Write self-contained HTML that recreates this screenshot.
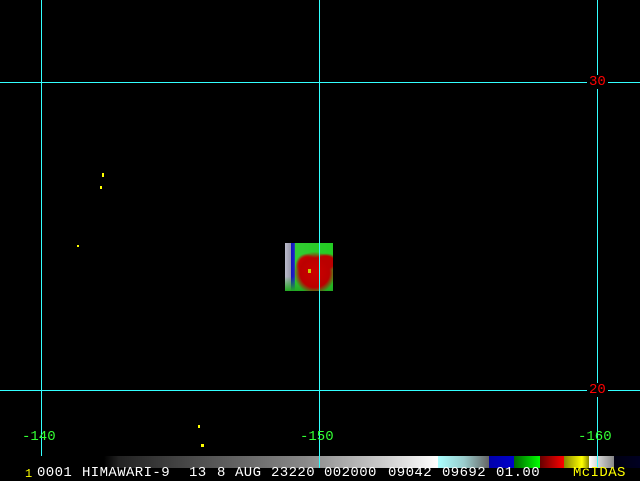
<!DOCTYPE html>
<html><head><style>
body{margin:0;width:640px;height:480px;background:#000;position:relative;overflow:hidden;font-family:"Liberation Mono",monospace}
.v{position:absolute;top:0;width:1px;height:456px;background:#3ff}
.h{position:absolute;left:0;width:640px;height:1px;background:#3ff}
.t{position:absolute;font-size:14px;line-height:14px;white-space:pre}
.s span{position:absolute;top:0;letter-spacing:0.4px}
.y{position:absolute;background:#ff0}
</style></head><body>
<div class="v" style="left:41px"></div>
<div class="v" style="left:319px"></div>
<div class="v" style="left:597px"></div>
<div class="h" style="top:82px"></div>
<div class="h" style="top:390px"></div>
<div class="t" style="left:587px;top:75px;color:#f00;background:#000;padding:0 2px">30</div>
<div class="t" style="left:587px;top:383px;color:#f00;background:#000;padding:0 2px">20</div>
<div class="t" style="left:22px;top:430px;color:#3f3">-140</div>
<div class="t" style="left:300px;top:430px;color:#3f3">-150</div>
<div class="t" style="left:578px;top:430px;color:#3f3">-160</div>
<div style="position:absolute;left:285px;top:243px;width:48px;height:48px;background:
radial-gradient(ellipse at 62% 62%,#c00 0,#b00 35%,transparent 50%),
radial-gradient(ellipse at 45% 45%,#c00 0,#c00 20%,transparent 30%),
radial-gradient(ellipse at 85% 40%,#b00 0,#b00 15%,transparent 22%),
linear-gradient(180deg,transparent 0,transparent 70%,#2a2 100%),
linear-gradient(90deg,#bbc 0,#99a 12%,#11b 13%,#22c 20%,#3c3 21%,#2c2 100%)"></div>
<div class="v" style="left:319px;top:243px;height:48px"></div>
<div class="y" style="left:308px;top:269px;width:3px;height:4px;background:#cc0"></div>
<div class="y" style="left:102px;top:173px;width:2px;height:4px"></div>
<div class="y" style="left:100px;top:186px;width:2px;height:3px"></div>
<div class="y" style="left:77px;top:245px;width:2px;height:2px"></div>
<div class="y" style="left:198px;top:425px;width:2px;height:3px"></div>
<div class="y" style="left:201px;top:444px;width:3px;height:3px"></div>
<div style="position:absolute;left:104px;top:456px;width:536px;height:12px;background:linear-gradient(90deg,
#000 0,#222 15px,#888 200px,#ccc 280px,#fff 334px,
#aff 334px,#9cc 360px,#666 385px,
#00a 385px,#00c 410px,
#060 410px,#0f0 436px,
#600 436px,#f00 460px,
#880 460px,#ff0 478px,#880 485px,
#fff 485px,#888 510px,
#001 510px,#002 536px)"></div>
<div class="v" style="left:319px;top:456px;height:12px"></div>
<div class="v" style="left:597px;top:456px;height:12px"></div>
<div class="t" style="left:25px;top:467px;color:#ff0;font-size:12px">1</div>
<div class="t s" style="left:0;top:466px;color:#fff;width:640px;height:14px">
<span style="left:37px">0001</span><span style="left:82px">HIMAWARI-9</span><span style="left:189px">13</span><span style="left:217px">8</span><span style="left:235px">AUG</span><span style="left:271px">23220</span><span style="left:324px">002000</span><span style="left:388px">09042</span><span style="left:442px">09692</span><span style="left:496px">01.00</span><span style="left:573px;color:#ff0">McIDAS</span></div>
</body></html>
